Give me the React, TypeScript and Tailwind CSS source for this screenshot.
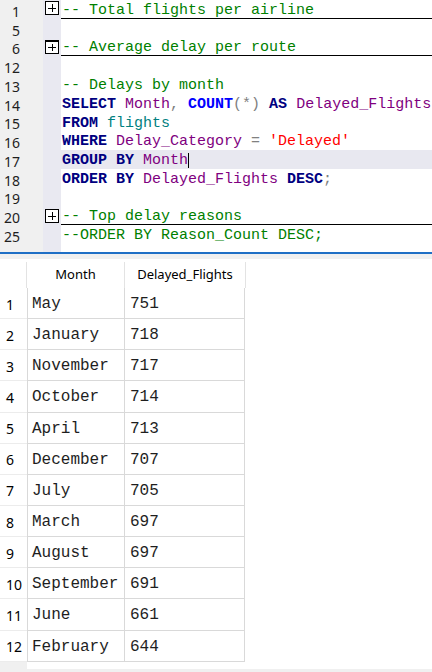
import { FC } from "react";

type Tok = [string, string?];

interface Line {
  n: number;
  fold?: boolean;
  current?: boolean;
  toks?: Tok[];
}

const comment = "text-[#008000]";
const kw = "text-[#000080] font-bold";
const fn = "text-[#0000ff] font-bold";
const ident = "text-[#800080]";
const obj = "text-[#008080]";
const op = "text-[#808080]";
const str = "text-[#ff0000]";

const lines: Line[] = [
  { n: 1, fold: true, toks: [["-- Total flights per airline", comment]] },
  { n: 5 },
  { n: 6, fold: true, toks: [["-- Average delay per route", comment]] },
  { n: 12 },
  { n: 13, toks: [["-- Delays by month", comment]] },
  {
    n: 14,
    toks: [
      ["SELECT", kw],
      [" "],
      ["Month", ident],
      [", ", op],
      ["COUNT", fn],
      ["(*)", op],
      [" "],
      ["AS", kw],
      [" "],
      ["Delayed_Flights", ident]
    ]
  },
  { n: 15, toks: [["FROM", kw], [" "], ["flights", obj]] },
  {
    n: 16,
    toks: [
      ["WHERE", kw],
      [" "],
      ["Delay_Category", ident],
      [" "],
      ["=", op],
      [" "],
      ["'Delayed'", str]
    ]
  },
  { n: 17, current: true, toks: [["GROUP BY", kw], [" "], ["Month", ident]] },
  {
    n: 18,
    toks: [
      ["ORDER BY", kw],
      [" "],
      ["Delayed_Flights", ident],
      [" "],
      ["DESC", kw],
      [";", op]
    ]
  },
  { n: 19 },
  { n: 20, fold: true, toks: [["-- Top delay reasons", comment]] },
  { n: 25, toks: [["--ORDER BY Reason_Count DESC;", comment]] }
];

const results: [string, number][] = [
  ["May", 751],
  ["January", 718],
  ["November", 717],
  ["October", 714],
  ["April", 713],
  ["December", 707],
  ["July", 705],
  ["March", 697],
  ["August", 697],
  ["September", 691],
  ["June", 661],
  ["February", 644]
];

const FoldBox: FC<{ heavy?: boolean }> = ({ heavy }) => (
  <div
    className={
      "relative mt-[1px] ml-[2px] h-[14px] w-[14px] border border-black bg-white " +
      (heavy ? "border-t-2" : "")
    }>
    <div className="absolute left-[2px] right-[2px] top-[5.5px] h-px bg-black" />
    <div className="absolute top-[2px] bottom-[2px] left-[5.5px] w-px bg-black" />
  </div>
);

const Editor: FC = () => (
  <div className="flex h-[252px] bg-white">
    <div className="w-[43px] bg-[#f0f0f0] font-['Noto_Sans',sans-serif] text-[14px] text-[#1e1e1e]">
      {lines.map((l) => (
        <div key={l.n} className="flex h-[18.75px] w-[20px] items-center justify-end pt-[4px]">
          {l.n}
        </div>
      ))}
    </div>
    <div className="w-[18px] bg-[#e9e9f1]">
      {lines.map((l) => (
        <div key={l.n} className="h-[18.75px]">
          {l.fold && <FoldBox heavy={l.n === 6} />}
        </div>
      ))}
    </div>
    <div className="flex-1 font-['Courier_New','Liberation_Mono',monospace] text-[15px]">
      {lines.map((l) => (
        <div
          key={l.n}
          className={
            "flex h-[18.75px] items-center whitespace-pre pl-px pt-[4px] " +
            (l.fold ? "border-b border-black " : "") +
            (l.current ? "bg-[#e8e8f0]" : "")
          }>
          {l.toks?.map(([t, c], i) => (
            <span key={i} className={c ?? ""}>
              {t}
            </span>
          ))}
          {l.current && <span className="mb-[1px] h-[15px] w-px self-end bg-black" />}
        </div>
      ))}
    </div>
  </div>
);

const Results: FC = () => (
  <div className="flex bg-white">
    <div className="w-[246px]">
      <div className="grid h-[29px] grid-cols-[27px_98px_121px] pt-[3px] font-['Noto_Sans',sans-serif] text-[13px] text-black">
        <div className="border-r border-[#e3e3e3]" />
        <div className="flex items-center justify-center border-r border-[#e3e3e3]">Month</div>
        <div className="flex items-center justify-center border-r border-[#e3e3e3]">Delayed_Flights</div>
      </div>
      {results.map(([m, v], i) => (
        <div key={m} className="grid h-[31.15px] grid-cols-[27px_98px_120px]">
          <div className="flex items-center border-b border-[#ececec] pl-[6px] pt-[2px] font-['Noto_Sans',sans-serif] text-[14px] text-black">
            {i + 1}
          </div>
          <div className="flex items-center border-x border-b border-[#d9d9d9] pl-[4px] pt-[2px] font-['Courier_New','Liberation_Mono',monospace] text-[16px] text-[#1e1e1e]">
            {m}
          </div>
          <div className="flex items-center border-r border-b border-[#d9d9d9] pl-[5px] pt-[2px] font-['Courier_New','Liberation_Mono',monospace] text-[16px] text-[#1e1e1e]">
            {v}
          </div>
        </div>
      ))}
      <div className="h-[7.5px] w-[27px] bg-[#f0f0f0]" />
    </div>
    <div className="flex-1" />
  </div>
);

export default function App() {
  return (
    <div className="h-[672px] w-[432px] overflow-hidden bg-[#f0f0f0]">
      <Editor />
      <div className="h-[2px] bg-[#1f6fc5]" />
      <div className="h-[5px] bg-[#f0f0f0]" />
      <Results />
    </div>
  );
}
